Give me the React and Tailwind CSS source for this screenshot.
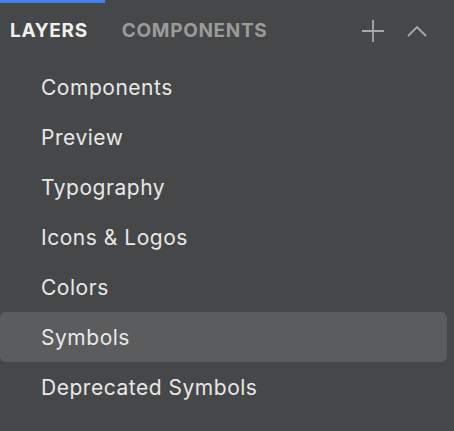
const ITEMS = [
  "Components",
  "Preview",
  "Typography",
  "Icons & Logos",
  "Colors",
  "Symbols",
  "Deprecated Symbols",
];

export default function App() {
  const active = "Symbols";
  return (
    <div
      className="flex h-[431px] w-[454px] flex-col bg-[#464748] text-[#e8e8e8]"
      style={{ fontFamily: "Inter, 'Noto Sans', sans-serif" }}
    >
      <div className="relative flex h-[62px] shrink-0 items-center pl-[10px] pr-[27px]">
        <div className="absolute left-0 top-0 h-[3px] w-[105px] bg-[#3b82f6]" />
        <div className="flex items-center gap-[34px] text-[19px] font-bold tracking-[0.035em]">
          <span className="text-[#f0f0f0]">LAYERS</span>
          <span className="text-[#9b9b9b]">COMPONENTS</span>
        </div>
        <div className="ml-auto flex items-center gap-[23px] text-[#a9a9a9]">
          <svg width="22" height="22" viewBox="0 0 22 22" fill="none" stroke="currentColor" strokeWidth="1.8">
            <path d="M11 0v22M0 11h22" />
          </svg>
          <svg width="20" height="12" viewBox="0 0 20 12" fill="none" stroke="currentColor" strokeWidth="1.8">
            <path d="M1 11l9-9 9 9" />
          </svg>
        </div>
      </div>
      <ul className="flex flex-col pr-[7px]">
        {ITEMS.map((item) => (
          <li
            key={item}
            className={`flex h-[50px] items-center rounded-[6px] pl-[41px] pt-[2px] text-[21px] tracking-[0.025em] ${
              item === active ? "bg-[#5b5c5e]" : ""
            }`}
          >
            {item}
          </li>
        ))}
      </ul>
    </div>
  );
}
